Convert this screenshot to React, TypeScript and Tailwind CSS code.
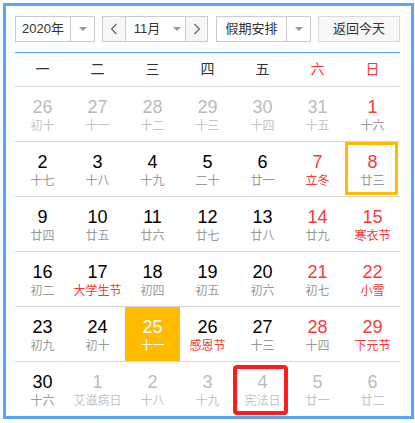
import React from "react";

type Day = {
  date: number;
  lunar: string;
  other?: boolean;
  redDate?: boolean;
  redLunar?: boolean;
  today?: boolean;
  selected?: boolean;
  marked?: boolean;
};

const weekdays = ["一", "二", "三", "四", "五", "六", "日"];

const rows: Day[][] = [
  [
    { date: 26, lunar: "初十", other: true },
    { date: 27, lunar: "十一", other: true },
    { date: 28, lunar: "十二", other: true },
    { date: 29, lunar: "十三", other: true },
    { date: 30, lunar: "十四", other: true },
    { date: 31, lunar: "十五", other: true },
    { date: 1, lunar: "十六", redDate: true },
  ],
  [
    { date: 2, lunar: "十七" },
    { date: 3, lunar: "十八" },
    { date: 4, lunar: "十九" },
    { date: 5, lunar: "二十" },
    { date: 6, lunar: "廿一" },
    { date: 7, lunar: "立冬", redDate: true, redLunar: true },
    { date: 8, lunar: "廿三", redDate: true, selected: true },
  ],
  [
    { date: 9, lunar: "廿四" },
    { date: 10, lunar: "廿五" },
    { date: 11, lunar: "廿六" },
    { date: 12, lunar: "廿七" },
    { date: 13, lunar: "廿八" },
    { date: 14, lunar: "廿九", redDate: true },
    { date: 15, lunar: "寒衣节", redDate: true, redLunar: true },
  ],
  [
    { date: 16, lunar: "初二" },
    { date: 17, lunar: "大学生节", redLunar: true },
    { date: 18, lunar: "初四" },
    { date: 19, lunar: "初五" },
    { date: 20, lunar: "初六" },
    { date: 21, lunar: "初七", redDate: true },
    { date: 22, lunar: "小雪", redDate: true, redLunar: true },
  ],
  [
    { date: 23, lunar: "初九" },
    { date: 24, lunar: "初十" },
    { date: 25, lunar: "十一", today: true },
    { date: 26, lunar: "感恩节", redLunar: true },
    { date: 27, lunar: "十三" },
    { date: 28, lunar: "十四", redDate: true },
    { date: 29, lunar: "下元节", redDate: true, redLunar: true },
  ],
  [
    { date: 30, lunar: "十六" },
    { date: 1, lunar: "艾滋病日", other: true },
    { date: 2, lunar: "十八", other: true },
    { date: 3, lunar: "十九", other: true },
    { date: 4, lunar: "宪法日", other: true, marked: true },
    { date: 5, lunar: "廿一", other: true },
    { date: 6, lunar: "廿二", other: true },
  ],
];

function Caret() {
  return <span className="h-0 w-0 border-x-[4px] border-t-[4px] border-x-transparent border-t-[#999]" />;
}

function Chevron({ dir }: { dir: "left" | "right" }) {
  return (
    <svg width="8" height="12" viewBox="0 0 8 12" fill="none">
      <polyline
        points={dir === "left" ? "6.5,1 1.5,6 6.5,11" : "1.5,1 6.5,6 1.5,11"}
        stroke="#666"
        strokeWidth="1.2"
      />
    </svg>
  );
}

function DayCell({ day }: { day: Day }) {
  let dateColor = "text-[#000]";
  let lunarColor = "text-[#999]";
  if (day.other) {
    dateColor = "text-[#bbb]";
    lunarColor = "text-[#c4c4c4]";
  } else {
    if (day.redDate) dateColor = "text-[#f53a3a]";
    if (day.redLunar) lunarColor = "text-[#f53a3a]";
  }
  if (day.today) {
    dateColor = "text-white";
    lunarColor = "text-white";
  }
  return (
    <div className={`relative flex h-[54px] flex-col items-center ${day.today ? "bg-[#ffbb00]" : ""}`}>
      <span
        className={`mt-[10px] text-[18px] leading-[20px] ${dateColor}`}
        style={{ fontFamily: '"Liberation Sans", Arial, sans-serif' }}
      >
        {day.date}
      </span>
      <span className={`mt-[2px] text-[12px] leading-[14px] ${lunarColor}`}>{day.lunar}</span>
      {day.selected && (
        <div className="absolute left-0 top-0 h-[53px] w-[53px] border-[3px] border-[#ffbb00]" />
      )}
      {day.marked && (
        <div className="absolute left-[-2px] top-[3px] h-[50px] w-[55px] rounded-[4px] border-[4px] border-[#ff1c1c]" />
      )}
    </div>
  );
}

export default function App() {
  return (
    <div
      className="ml-[3px] mt-[3px] w-[411px] border-[3px] border-[#58a6f7] bg-white pb-0 pl-[9px] pr-[11px] pt-[10px]"
      style={{ fontFamily: '"Liberation Sans", "Noto Sans CJK SC", sans-serif' }}
    >
      <div className="flex h-[26px] text-[13px] text-[#333]">
        <div className="flex w-[80px] border border-[#ccc] bg-white">
          <span className="flex flex-1 items-center justify-center">2020年</span>
          <span className="flex w-[24px] items-center justify-center border-l border-[#ccc]">
            <Caret />
          </span>
        </div>
        <div className="ml-[7px] flex w-[106px] border border-[#ccc]">
          <span className="flex w-[22px] items-center justify-center bg-[#f7f7f7]">
            <Chevron dir="left" />
          </span>
          <span className="flex flex-1 items-center justify-center gap-[13px] border-x border-[#ccc] bg-white pl-[4px]">
            11月
            <Caret />
          </span>
          <span className="flex w-[21px] items-center justify-center bg-[#f7f7f7]">
            <Chevron dir="right" />
          </span>
        </div>
        <div className="ml-[8px] flex w-[95px] border border-[#ccc] bg-white">
          <span className="flex flex-1 items-center justify-center">假期安排</span>
          <span className="flex w-[24px] items-center justify-center border-l border-[#ccc]">
            <Caret />
          </span>
        </div>
        <button className="ml-[7px] w-[82px] border border-[#d9d9d9] bg-[#f7f7f7] text-[13px] text-[#333]">
          返回今天
        </button>
      </div>
      <div className="mt-[10px] border-t border-[#58a6f7]" />
      <div className="grid h-[33px] grid-cols-7 items-center text-[14px] text-[#333]">
        {weekdays.map((w, i) => (
          <span key={w} className={`text-center ${i >= 5 ? "text-[#f53a3a]" : ""}`}>
            {w}
          </span>
        ))}
      </div>
      {rows.map((row, r) => (
        <div key={r} className="grid grid-cols-7 border-t border-[#d4d4d4]">
          {row.map((day, i) => (
            <DayCell key={i} day={day} />
          ))}
        </div>
      ))}
    </div>
  );
}
